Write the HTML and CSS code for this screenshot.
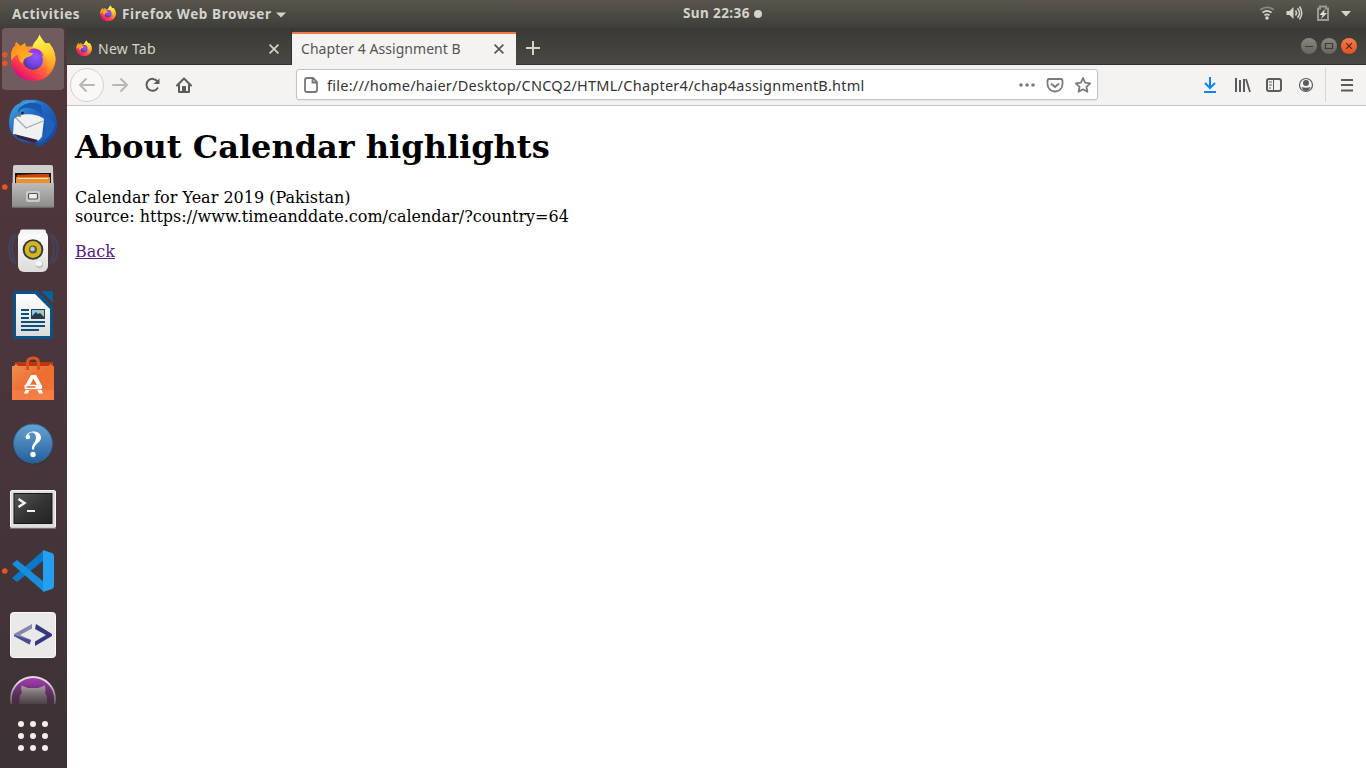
FILE: index.html
```html
<!DOCTYPE html>
<html lang="en">
<head>
<meta charset="utf-8">
<title>Chapter 4 Assignment B</title>
<link rel="stylesheet" href="styles.css">
</head>
<body>
<svg class="defs" width="0" height="0" aria-hidden="true">
  <defs>
    <linearGradient id="ffBody" x1=".85" y1=".1" x2=".25" y2=".95"><stop offset="0" stop-color="#fff44f"/><stop offset=".3" stop-color="#ffb52b"/><stop offset=".55" stop-color="#ff7139"/><stop offset=".78" stop-color="#fb3c4b"/><stop offset="1" stop-color="#e00b7d"/></linearGradient>
    <linearGradient id="ffFlame" x1=".5" y1="0" x2=".8" y2="1"><stop offset="0" stop-color="#fff44f"/><stop offset=".45" stop-color="#ffd230"/><stop offset="1" stop-color="#ff8a16" stop-opacity=".3"/></linearGradient>
    <radialGradient id="ffGlobe" cx=".65" cy=".3" r=".75"><stop offset="0" stop-color="#9059ff"/><stop offset=".6" stop-color="#7346e0"/><stop offset="1" stop-color="#512fa2"/></radialGradient>
    <linearGradient id="ffFox" x1="0" y1="0" x2="1" y2="1"><stop offset="0" stop-color="#ff8a16"/><stop offset="1" stop-color="#ffbd2b"/></linearGradient>
    <linearGradient id="metal" x1="0" y1="0" x2="0" y2="1"><stop offset="0" stop-color="#bcbcba"/><stop offset="1" stop-color="#8c8c8a"/></linearGradient>
    <linearGradient id="paper" x1="0" y1="0" x2="0" y2="1"><stop offset="0" stop-color="#fff"/><stop offset="1" stop-color="#dcdcda"/></linearGradient>
    <linearGradient id="bag" x1="0" y1="0" x2="1" y2="1"><stop offset="0" stop-color="#eb9152"/><stop offset=".5" stop-color="#ee6d31"/><stop offset="1" stop-color="#f0743a"/></linearGradient>
    <linearGradient id="help" x1="0" y1="0" x2="0" y2="1"><stop offset="0" stop-color="#65a3d2"/><stop offset="1" stop-color="#255f9c"/></linearGradient>
    <linearGradient id="term" x1="0" y1="0" x2="1" y2="1"><stop offset="0" stop-color="#585858"/><stop offset=".5" stop-color="#353535"/><stop offset="1" stop-color="#222"/></linearGradient>
    <linearGradient id="bird" x1="0" y1="0" x2="1" y2="1"><stop offset="0" stop-color="#42b0e2"/><stop offset=".4" stop-color="#206bc7"/><stop offset="1" stop-color="#193c91"/></linearGradient>
    <linearGradient id="cat" x1="0" y1="0" x2="0" y2="1"><stop offset="0" stop-color="#b2adb1"/><stop offset="1" stop-color="#82797f"/></linearGradient>
    <linearGradient id="purple" x1="0" y1="0" x2="0" y2="1"><stop offset="0" stop-color="#a63db2"/><stop offset=".6" stop-color="#572261"/></linearGradient>
  </defs>
  <symbol id="firefox" viewBox="0 0 46 48">
    <path d="M2 16C3 13 4 12 5 11.500L6 7.500L10.500 11.500L15 8.500L16 12L24 12C25 6 28 5 29.600 0C30.500 3 32 4 33 6L35.500 9L39 8.500C43 13 45.500 19 45.500 25C45 38 35 46.500 23 46.500C11 46.500 1 37 1 26C1 22 1 19 2 16Z" fill="url(#ffBody)"/>
    <path d="M29.600 0C30.500 3 32 4 33 6L35.500 9L39 8.500C43 13 45.500 19 45.500 25C45 33 41 38 36 40C39 33 38 24 33 18C29 14 25 14 22.500 13C23 7 28 6 29.600 0Z" fill="url(#ffFlame)"/>
    <circle cx="23" cy="25.500" r="10" fill="url(#ffGlobe)"/>
    <path d="M20 15C27 12 33 17 33 22C29 17 24 19 20 15Z" fill="#a833e1"/>
    <path d="M2 16C3 13 4 12 5 11.500L6 7.500L10.500 11.500L15 8.500L15.500 13C17 14 17.500 16 18 17C20 18.500 22 18 23 19C22 22 18 22 15 24C13 26 13 28 13 29C9 27 8 23 8 20C5 21 3 23 1.500 26C1 20 1 18 2 16Z" fill="url(#ffFox)"/>
  </symbol>
</svg>

<header class="topbar">
  <div class="top-left">
    <span class="activities">Activities</span>
    <svg class="app-icon"><use href="#firefox"/></svg>
    <span class="app-name">Firefox Web Browser</span>
    <svg class="caret" viewBox="0 0 10 6"><path d="M0 .5h10L5 5.500z" fill="#d3d3cf"/></svg>
  </div>
  <div class="clock"><span class="clock-text">Sun 22:36</span><i class="clock-dot"></i></div>
  <svg class="status" viewBox="0 0 100 28" fill="none">
    <path d="M1.300 9.800Q8 5 14.700 9.800" stroke="#8b8a84" stroke-width="1.700"/>
    <path d="M3.500 12.700Q8 9 12.500 12.700M5.500 15.300Q8 13.300 10.500 15.300" stroke="#d3d3cf" stroke-width="1.700"/><circle cx="8" cy="18" r="1.800" fill="#d3d3cf"/>
    <path d="M27.500 11h3l4-4v12l-4-4h-3z" fill="#d3d3cf"/><path d="M36.500 10.500q2 2.500 0 5M38.500 8.300q4 4.700 0 9.400M40.500 6.500q4.500 6.500 0 13" stroke="#d3d3cf" stroke-width="1.500"/>
    <path d="M61 6.500h6v2h2v11.500h-10V8.500h2z" stroke="#999892" stroke-width="2"/><path d="M66 9l-5.500 6h3l-1.500 4 6-6h-3z" fill="#dededa"/>
    <path d="M82 11h10l-5 5.500z" fill="#d3d3cf"/>
  </svg>
</header>

<div class="desktop">
  <nav class="dock">
    <div class="apps">
      <div class="app active"><svg viewBox="0 0 62 62"><circle cx="2.800" cy="26.700" r="2.800" fill="#e95420"/><circle cx="2.800" cy="35.200" r="2.800" fill="#e95420"/><use href="#firefox" x="8" y="6.500" width="46" height="48"/></svg></div>
      <div class="app"><svg viewBox="0 0 62 62">
        <path d="M9 40C4 26 10 14 18 11C20 8 24 7 28 8C41 6 53 16 55 29C56 38 53 44 48 49L49 46C44 53 37 55 33 54L37 51C23 52 14 49 9 40Z" fill="url(#bird)"/>
        <path d="M18 14C22 8 30 7 34 10C28 11 23 14 18 20Z" fill="#4299d8"/>
        <path d="M16 21C20 13 32 14 41 24L39 13C28 7 15 14 16 21Z" fill="#1a58ac"/>
        <path d="M12 27L16 24C24 21 36 22 42 27L40 45L36 49L11 42Z" fill="#eff1f3"/><path d="M14 26L24 36L41 29" fill="none" stroke="#a4aaad" stroke-width="1.200"/>
        <path d="M41 24C45 33 44 41 36 51C45 49 51 41 53 32L43 20Z" fill="#1d61bb"/><path d="M12 42L36 48L32 51L16 46Z" fill="#34233e"/><circle cx="20.500" cy="21" r="1.300" fill="#221c31"/><path d="M14 24L18 21L19 25Z" fill="#77736b"/>
      </svg></div>
      <div class="app"><svg viewBox="0 0 62 62">
        <circle cx="2.800" cy="31" r="2.800" fill="#e95420"/><path d="M11 11q0-2 2-2h36q2 0 2 2l1 40H10z" fill="#cfcfcd"/><path d="M13 17h36v10H13z" fill="#161616"/><path d="M15 19l20-1h12v8H15z" fill="#c64512"/><path d="M14 21h34v6H14z" fill="#ee8e33"/><path d="M16 22.500h30" stroke="#fce3b2"/><path d="M10 27h42v22.500q0 2-2 2H12q-2 0-2-2z" fill="url(#metal)"/><path d="M10 51h42" stroke="#767674"/><rect x="24" y="35" width="14" height="11" rx="2" fill="#cbcbc9"/><rect x="26.500" y="37.500" width="9" height="5.500" rx="1" fill="#eee" stroke="#555" stroke-width="1.200"/>
      </svg></div>
      <div class="app"><svg viewBox="0 0 62 62">
        <path d="M11 15C6 24 6 34 11 43M14 14C9 24 9 35 14 44M48 14C53 24 53 35 48 44M51 15C57 24 57 34 51 43" fill="none" stroke="#434a6b" stroke-width="1.800" opacity=".75"/><rect x="16" y="11" width="30" height="41" rx="6" fill="url(#paper)"/><rect x="18" y="9.500" width="26" height="5" rx="2" fill="#f5f5f3"/><circle cx="31" cy="29.500" r="10.300" fill="#34363b"/><circle cx="31" cy="29.500" r="8.400" fill="#d3b51c"/><circle cx="31" cy="29.500" r="4" fill="#5c5a54"/><circle cx="30.500" cy="29" r="2.300" fill="#c6c6c0"/><path d="M34 42q4-2 7 0v5q-3 3-7 0z" fill="#c6c6c3"/><path d="M34 42q3-2 6 0v3q-3 2-6 0z" fill="#f5f5f5"/><rect x="21" y="42" width="6" height="5" rx="1" fill="none" stroke="#ddd"/>
      </svg></div>
      <div class="app"><svg viewBox="0 0 62 62">
        <path d="M13 7h23l15 16v29q0 3-3 3H14q-3 0-3-3V10q0-3 2-3z" fill="#0b5286"/><path d="M39 7h10q2 0 2 2v10z" fill="#0a629d"/><path d="M14 10h19l15 15v27H14z" fill="url(#paper)"/><path d="M19 26h8M19 30h8M19 34h8M19 38h24M19 42h24M19 46h18" stroke="#0b5078" stroke-width="2"/><rect x="29.500" y="25.500" width="13" height="9" fill="#8dc8ea" stroke="#17445d"/><circle cx="40" cy="28" r="1.500" fill="#ebbd38"/><path d="M30 34v-2l4-4 2 2 2-1 4 4v1z" fill="#303a3c"/>
      </svg></div>
      <div class="app"><svg viewBox="0 0 62 62">
        <path d="M13 14h38v7H12z" fill="#b63914"/><path d="M10 18h2l2-2 2 2h30l3-2 2 2h1v34H10z" fill="url(#bag)"/><path d="M10 42h42v10H10z" fill="#f78950" opacity=".55"/><path d="M25.500 22v-7q0-5 5-5h1q5 0 5 5v7" fill="none" stroke="#dc541d" stroke-width="3"/><path d="M29 27h5l5.500 10h-4.500L31.500 30.500l-3.500 6.500h-4.500zM23.500 42h4l-1.500 3.500h-4zM35.500 42h4l1.500 3.500h-4z" fill="#fff"/><rect x="22.500" y="36.700" width="17.500" height="4.500" rx="1" fill="#fff"/><path d="M24.500 39h9" stroke="#e86b30" stroke-width="1.500"/>
      </svg></div>
      <div class="app"><svg viewBox="0 0 62 62">
        <circle cx="31" cy="32.500" r="20.500" fill="#302d38" opacity=".35"/><circle cx="31" cy="31.500" r="19.500" fill="url(#help)" stroke="#2e6490"/><g transform="translate(0 -.5)" fill="#fff"><path d="M24 27C23 18 39 17.500 39 26C39 31 32 32 32 38H30C29.500 32 34 31 34 26C34 20 28 20 26.500 23Z"/><circle cx="25.800" cy="25.500" r="2.300"/><circle cx="31" cy="43" r="2.700"/></g>
      </svg></div>
      <div class="app"><svg viewBox="0 0 62 62">
        <rect x="8.500" y="14.500" width="45" height="37" rx="1.500" fill="#dededb" stroke="#f5f5f3"/><rect x="12" y="17.500" width="38" height="30" fill="url(#term)" stroke="#171917"/><path d="M16.500 23l6 4-6 4" fill="none" stroke="#f0f0ee" stroke-width="2.500"/><path d="M25 35h8" stroke="#f0f0ee" stroke-width="2"/><path d="M8 52h46" stroke="#a5a5a2"/>
      </svg></div>
      <div class="app"><svg viewBox="0 0 62 62">
        <circle cx="2.800" cy="31" r="2.800" fill="#e95420"/><path d="M10 38l5 4L42 20V10z" fill="#0b79c7"/><path d="M10 24l5-4L42 42v10z" fill="#168edb"/><path d="M41 10l9 3q2 1 2 3v30q0 2-2 3l-9 3z" fill="#259ff0"/>
      </svg></div>
      <div class="app"><svg viewBox="0 0 62 62">
        <rect x="8.500" y="8.500" width="45" height="45" rx="3" fill="#e9e9e8" stroke="#fafafa"/><path d="M30 20v4.500L18 31l11 5-1.500 4.500L12 32v-2z" fill="#8487ab"/><path d="M12 31l17 5-1.500 4.500L12 32z" fill="#4b4e92"/><path d="M34 20l16 10v2L33 42v-4.500L44 31l-11-6z" fill="#353781"/>
      </svg></div>
      <div class="app"><svg viewBox="0 0 62 62">
        <circle cx="31" cy="31" r="22" fill="url(#purple)" stroke="#dedbde" stroke-width="1.800"/><path d="M18 40C17 31 17 27 20 25C19 22 19 20 19.500 17.500L26 20H36L43 17.500C43 20 44 22 43 25C46 29 45 33 44 40Z" fill="url(#cat)"/>
      </svg></div>
    </div>
    <div class="launcher"><i></i><i></i><i></i><i></i><i></i><i></i><i></i><i></i><i></i></div>
  </nav>

  <main class="window">
    <div class="tabs">
      <div class="tab"><svg class="tab-icon"><use href="#firefox"/></svg><span class="tab-title new-title">New Tab</span><svg class="close" viewBox="0 0 10 10"><path d="M.6.600l8.800 8.800M9.400.600L.6 9.400"/></svg></div>
      <div class="tab selected"><span class="tab-title page-title">Chapter 4 Assignment B</span><svg class="close" viewBox="0 0 10 10"><path d="M.6.600l8.800 8.800M9.400.600L.6 9.400"/></svg></div>
      <svg class="plus" viewBox="0 0 14 14"><path d="M7 0v14M0 7h14"/></svg>
      <div class="controls">
        <svg class="control" viewBox="0 0 16 16"><path d="M4 8.500h8"/></svg>
        <svg class="control" viewBox="0 0 16 16"><path d="M4.500 5.500h7v5h-7z"/></svg>
        <svg class="control quit" viewBox="0 0 16 16"><path d="M5.200 5.200l5.600 5.600m0-5.600l-5.600 5.600"/></svg>
      </div>
    </div>
    <div class="toolbar">
      <svg class="nav-icons" viewBox="0 0 130 40" fill="none" stroke-linecap="round" stroke-linejoin="round">
        <circle cx="20" cy="20" r="16.500" fill="#f9f8f7" stroke="#d4d2d0"/><path d="M27 20H13m6-6l-6 6 6 6M46 20h14m-6-6l6 6-6 6" stroke="#b8b7b5" stroke-width="2"/>
        <path d="M90.500 16.500A6 6 0 1 0 90.500 23.200" stroke="#5b5b5b" stroke-width="2"/><path d="M92.500 13.500v5.500h-6z" fill="#5b5b5b"/>
        <path d="M110 20.500l7-7 7 7M112 19.500v7.500h10v-7.500" stroke="#5b5b5b" stroke-width="2"/><path d="M115 26.500v-5.500h4v5.500z" fill="#5b5b5b"/>
      </svg>
      <div class="address">
        <svg class="page-icon" viewBox="0 0 14 16"><path d="M3 1h6l4 4v8q0 2-2 2H3q-2 0-2-2V3q0-2 2-2zM8.500 1v4.500H13"/></svg>
        <span class="url">file:///home/haier/Desktop/CNCQ2/HTML/Chapter4/chap4assignmentB.html</span>
        <svg class="url-actions" viewBox="0 0 74 20"><g fill="#7b7b7b"><circle cx="3" cy="10" r="1.800"/><circle cx="9" cy="10" r="1.800"/><circle cx="15" cy="10" r="1.800"/></g><path d="M31 4h12q1.500 0 1.500 2v3a7 7 0 0 1-15 0V6q0-2 1.500-2zM33 8.500l4 3.500 4-3.500M65 3l2.100 4.700 5.100.6-3.800 3.500 1 5-4.400-2.500-4.400 2.500 1-5-3.800-3.500 5.100-.6z" fill="none" stroke="#7b7b7b" stroke-width="1.800" stroke-linejoin="round"/></svg>
      </div>
      <svg class="tool-icons" viewBox="0 0 166 40" fill="none" stroke="#5b5b5b" stroke-width="2">
        <path d="M10 12v11M5 18l5 5 5-5M4 27h12" stroke="#0a84ff"/>
        <path d="M36 13v14M40 15v12M44 14v13"/><path d="M46 14l4 13" stroke-width="1.800"/>
        <rect x="67" y="14" width="14" height="12" rx="2"/><path d="M73.500 14v12" stroke-width="1"/><path d="M69 17h3m-3 3h3m-3 3h2" stroke-width="1"/>
        <circle cx="106" cy="20" r="6.500" stroke-width="1.200"/><circle cx="106" cy="18" r="3" fill="#5b5b5b" stroke="none"/><path d="M101.500 22q4.500 1.500 9 0-1.500 4-4.500 4t-4.500-4z" fill="#5b5b5b" stroke="none"/>
        <path d="M125.500 3v34" stroke="#d8d6d4" stroke-width="1"/><path d="M141 15h12m-12 5h12m-12 5.500h12" stroke-width="1.800"/>
      </svg>
    </div>
    <article class="page">
      <h1>About Calendar highlights</h1>
      <p>Calendar for Year 2019 (Pakistan)<br>source: https://www.timeanddate.com/calendar/?country=64</p>
      <a href="#">Back</a>
    </article>
  </main>
</div>
</body>
</html>
```
FILE: styles.css
```css
* { box-sizing: border-box; }
body { margin: 0; width: 1366px; height: 768px; overflow: hidden; font-family: "Noto Sans", "Open Sans", sans-serif; }
svg { display: block; flex: none; }
.defs { position: absolute; }
.topbar { height: 28px; display: grid; grid-template-columns: 683px 1fr 100px; padding-right: 7px; color: #d3d3cf; background: linear-gradient(#58564d, #3f3e3a); font-size: 13.5px; font-weight: 700; line-height: 27px; white-space: nowrap; }
.top-left { display: flex; align-items: center; padding-left: 12px; }
.activities { width: 88px; letter-spacing: .55px; }
.app-icon { width: 16px; height: 17px; margin-top: -2px; }
.app-name { width: 149px; margin-left: 6px; letter-spacing: .6px; }
.caret { width: 10px; height: 6px; margin-left: 5px; }
.clock { display: flex; align-items: center; padding-bottom: 2px; }
.clock-text { width: 68px; letter-spacing: .4px; }
.clock-dot { width: 8px; height: 8px; margin-left: 3px; border-radius: 50%; background: #d3d3cf; }
.status { width: 100px; height: 28px; }
.desktop { display: flex; height: 740px; }
.dock { width: 67px; flex: none; background: linear-gradient(#523639, #49363c 48%, #3d3235); }
.apps { height: 676px; overflow: hidden; display: flex; flex-direction: column; gap: 2px; padding-left: 2px; -webkit-mask-image: linear-gradient(#000 655px, #0003 676px); mask-image: linear-gradient(#000 655px, #0003 676px); }
.app { width: 62px; height: 62px; flex: none; border-radius: 4px; }
.app.active { background: #705b5e; }
.app svg { width: 62px; height: 62px; }
.launcher { display: grid; grid-template-columns: repeat(3, 6px); gap: 6px; padding: 17px 0 0 18px; }
.launcher i { width: 6px; height: 6px; border-radius: 50%; background: #f0efed; }
.window { flex: 1; background: #fff; }
.tabs { height: 37px; display: flex; align-items: stretch; background: linear-gradient(#3a3934, #4a4842); border-bottom: 1px solid #33322e; color: #d5d3ca; }
.tab { width: 225px; height: 37px; display: flex; align-items: center; padding: 4px 12px 0 9px; border-right: 1px solid #2f2e2b; font-size: 14px; }
.tab.selected { height: 33px; width: 224px; margin-top: 4px; padding-top: 0; border-top: 2px solid #f07746; border-right: 0; background: #f4f3f2; color: #555; }
.tab-icon { width: 16px; height: 17px; }
.tab-title { white-space: nowrap; letter-spacing: .05px; }
.new-title { margin-left: 6px; letter-spacing: .25px; }
.page-title { margin-top: -2px; }
.selected .close { margin-top: -1px; }
.close { width: 10px; height: 10px; margin-left: auto; fill: none; stroke: currentColor; stroke-width: 1.700; }
.plus { width: 14px; height: 14px; margin: 13px 0 0 10px; fill: none; stroke: #d5d3ca; stroke-width: 2; }
.controls { display: flex; gap: 4px; margin: 10px 9px 0 auto; }
.control { width: 16px; height: 16px; border-radius: 50%; background: linear-gradient(#898780, #67655f); fill: none; stroke: #3d3c38; stroke-width: 1.200; }
.control.quit { background: linear-gradient(#f47b51, #e4511d); stroke: #5a2515; }
.toolbar { height: 41px; display: flex; background: #f4f3f2; border-bottom: 1px solid #c9c6c3; }
.nav-icons { width: 130px; height: 40px; }
.address { width: 802px; height: 31px; margin: 4px 0 0 99px; display: flex; align-items: center; padding: 0 5px 0 7px; border: 1px solid #c4c1be; border-radius: 3px; background: #fff; box-shadow: 0 1px 2px #0001; }
.page-icon { width: 14px; height: 16px; fill: none; stroke: #777; stroke-width: 1.800; }
.url { margin-left: 9px; padding-top: 1px; font-size: 14.5px; letter-spacing: .25px; color: #333; white-space: nowrap; }
.url-actions { width: 74px; height: 20px; margin-left: auto; }
.tool-icons { width: 166px; height: 40px; margin-left: auto; }
.page { padding: 22px 8px 0; font-family: "DejaVu Serif", serif; font-size: 16px; color: #000; }
.page h1 { margin: 0; font-size: 32px; line-height: 38px; }
.page p { margin: 22px 0 16px; line-height: 19px; }
.page a { color: #551a8b; line-height: 19px; }
```
